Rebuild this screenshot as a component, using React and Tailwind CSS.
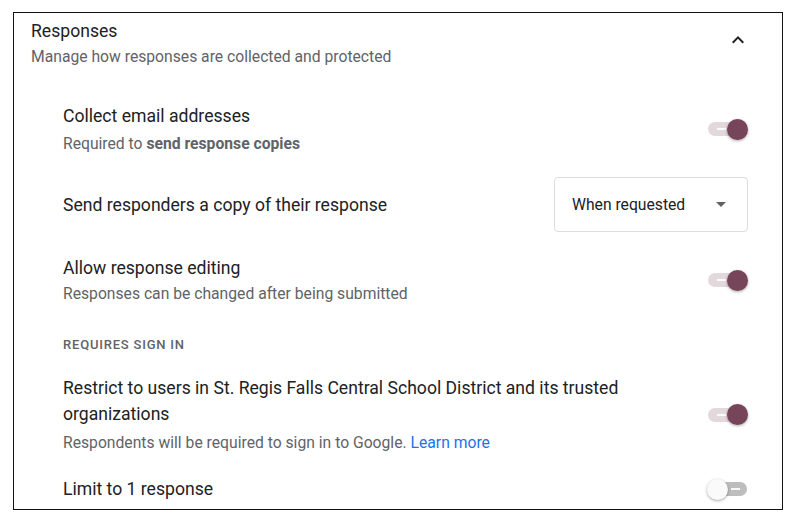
import React, { useState } from "react";

const Toggle = ({ on, onChange }) => (
  <button
    type="button"
    onClick={() => onChange(!on)}
    className="relative w-[40px] h-[22px] flex items-center shrink-0"
  >
    <span
      className={`absolute left-0 right-[1px] h-[14px] rounded-full ${on ? "bg-[#e3d9dd]" : "bg-[#bdbdbd]"}`}
    />
    <span
      className={`absolute top-[10px] h-[2px] w-[9px] bg-white/90 ${on ? "left-[9px]" : "left-[23px]"}`}
    />
    <span
      className={`absolute w-[21px] h-[21px] rounded-full shadow-[0_1px_3px_rgba(0,0,0,0.35)] ${
        on ? "left-[19px] bg-[#774559]" : "left-[-1px] bg-[#fafafa]"
      }`}
    />
  </button>
);

const SettingRow = ({ title, sub, subClass = "mt-[3px]", children, className = "" }) => (
  <div className={`flex items-center justify-between ${className}`}>
    <div className="flex flex-col">
      <div className="text-[17.6px] leading-[26px] text-[#202124]">{title}</div>
      {sub && <div className={`${subClass} text-[15.7px] leading-[22px] text-[#5f6368]`}>{sub}</div>}
    </div>
    {children}
  </div>
);

export default function App() {
  const [collect, setCollect] = useState(true);
  const [editing, setEditing] = useState(true);
  const [restrict, setRestrict] = useState(true);
  const [limit, setLimit] = useState(false);

  return (
    <div className="w-[795px] h-[525px] bg-white pt-[12px] pl-[13px]" style={{ fontFamily: "Roboto, 'Liberation Sans', sans-serif" }}>
      <div className="w-[770px] h-[498px] border-[1.5px] border-[#111] overflow-hidden">
        <div className="flex justify-between pl-[17px] pr-[32px] pt-[5px]">
          <div>
            <div className="text-[17.6px] leading-[26px] text-[#202124]">Responses</div>
            <div className="mt-[2px] text-[15.7px] leading-[22px] text-[#5f6368]">
              Manage how responses are collected and protected
            </div>
          </div>
          <div className="pt-[10px]">
            <svg width="24" height="24" viewBox="0 0 24 24">
              <path d="M12 8l-6 6 1.41 1.41L12 10.83l4.59 4.58L18 14z" fill="#202124" />
            </svg>
          </div>
        </div>

        <div className="pl-[49px] pr-[34px]">
          <SettingRow
            className="mt-[35px]"
            subClass="mt-[4px]"
            title="Collect email addresses"
            sub={
              <>
                Required to <span className="font-bold">send response copies</span>
              </>
            }
          >
            <Toggle on={collect} onChange={setCollect} />
          </SettingRow>

          <SettingRow className="mt-[22px]" title="Send responders a copy of their response">
            <div className="w-[194px] h-[55px] border border-[#dadce0] rounded-[4px] flex items-center justify-between pl-[17px] pr-[21px]">
              <span className="text-[15.7px] text-[#202124]">When requested</span>
              <svg width="10" height="5" viewBox="0 0 10 5">
                <path d="M0 0l5 5 5-5z" fill="#5f6368" />
              </svg>
            </div>
          </SettingRow>

          <SettingRow
            className="mt-[23px]"
            subClass="mt-[2px]"
            title="Allow response editing"
            sub="Responses can be changed after being submitted"
          >
            <Toggle on={editing} onChange={setEditing} />
          </SettingRow>

          <div className="mt-[32px] text-[13px] leading-[16px] font-medium tracking-[0.8px] text-[#5f6368]">
            REQUIRES SIGN IN
          </div>

          <SettingRow
            className="mt-[22px]"
            subClass="mt-[5px]"
            title={
              <div className="max-w-[600px]">
                Restrict to users in St. Regis Falls Central School District and its trusted organizations
              </div>
            }
            sub={
              <>
                Respondents will be required to sign in to Google.{" "}
                <a className="text-[#1a73e8]" href="#">Learn more</a>
              </>
            }
          >
            <Toggle on={restrict} onChange={setRestrict} />
          </SettingRow>

          <SettingRow className="mt-[22px]" title="Limit to 1 response">
            <Toggle on={limit} onChange={setLimit} />
          </SettingRow>
        </div>
      </div>
    </div>
  );
}
